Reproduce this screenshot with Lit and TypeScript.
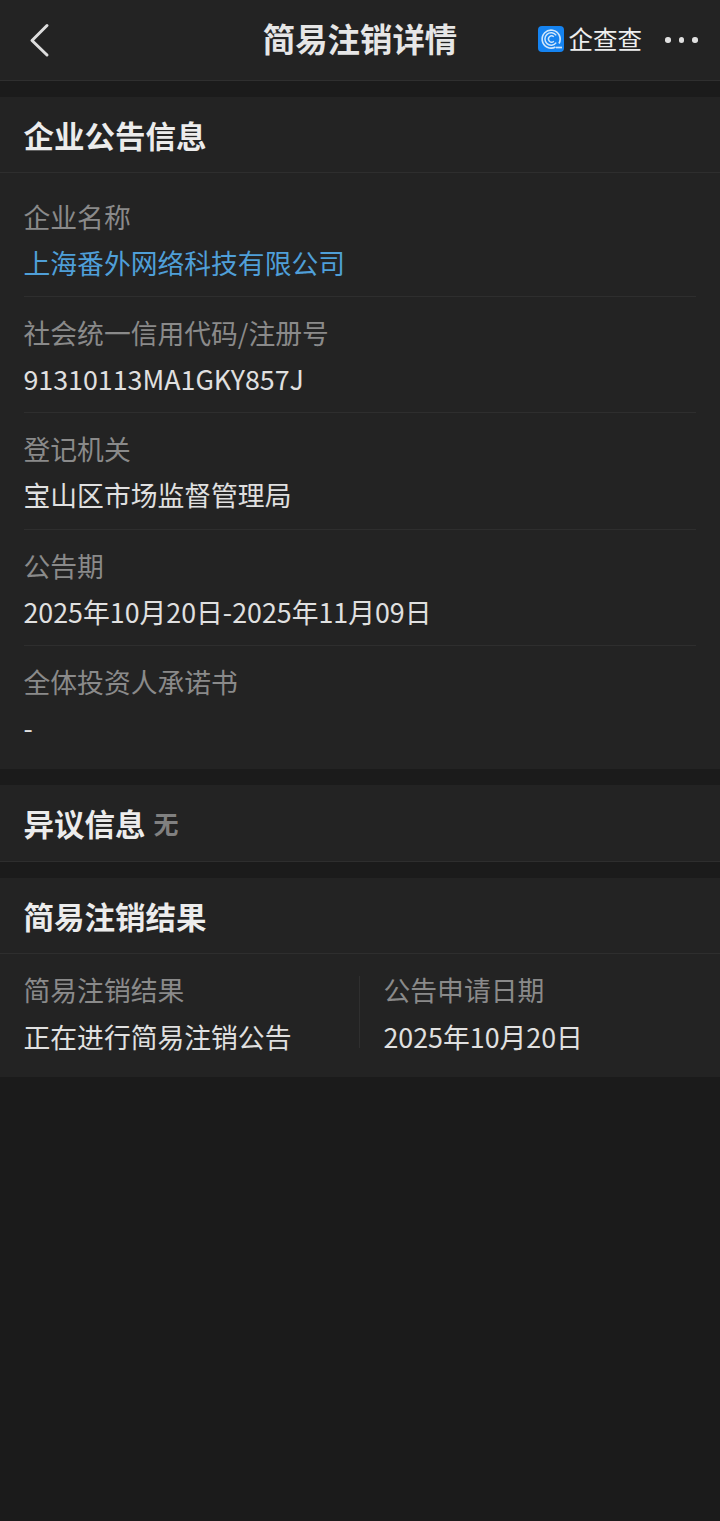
import { LitElement, html, css } from "lit";
import { customElement } from "lit/decorators.js";

const rows = [
  { label: "企业名称", value: "上海番外网络科技有限公司", link: true },
  { label: "社会统一信用代码/注册号", value: "91310113MA1GKY857J" },
  { label: "登记机关", value: "宝山区市场监督管理局" },
  { label: "公告期", value: "2025年10月20日-2025年11月09日" },
  { label: "全体投资人承诺书", value: "-" },
];

@customElement("app-root")
export class AppRoot extends LitElement {
  static styles = css`
    :host {
      display: block;
      width: 720px;
      height: 1521px;
      background: #1b1b1b;
      font-family: "Noto Sans CJK SC", "Noto Sans", sans-serif;
      overflow: hidden;
    }
    .nav {
      height: 80px;
      background: #232323;
      border-bottom: 1px solid #2f2f2f;
      display: flex;
      align-items: center;
      position: relative;
      padding: 0 22.5px 0 28px;
    }
    .nav-title {
      position: absolute;
      left: 0;
      right: 0;
      top: -2px;
      text-align: center;
      font-size: 32.4px;
      font-weight: 700;
      line-height: 80px;
      color: #e6e6e6;
    }
    .back { display: block; position: relative; }
    .brand {
      margin-left: auto;
      display: flex;
      align-items: center;
      position: relative;
      top: -1px;
      gap: 5px;
    }
    .brand-name {
      font-size: 24.5px;
      line-height: 30px;
      color: #eeeeee;
      font-weight: 400;
    }
    .more { display: flex; gap: 8px; margin-left: 23px; position: relative; }
    .more i {
      width: 5.5px; height: 5.5px; border-radius: 50%; background: #e0e0e0; display: block;
    }
    .section {
      margin-top: 16px;
      background: #232323;
    }
    .head {
      height: 76px;
      box-sizing: border-box;
      border-bottom: 1px solid #2e2e2e;
      padding: 0 23.5px;
      display: flex;
      align-items: center;
      gap: 8px;
    }
    .head.tall { height: 77px; }
    .head h2 {
      margin: 0;
      font-size: 30.5px;
      font-weight: 700;
      line-height: 72px;
      color: #ececec;
    }
    .head span {
      font-size: 25px;
      font-weight: 700;
      color: #808080;
      line-height: 1;
    }
    .list { padding: 0 24px 0 23.5px; }
    .row {
      height: 116.4px;
      box-sizing: border-box;
      padding-top: 16px;
      border-bottom: 1px solid #2e2e2e;
    }
    .row:first-child { height: 124px; padding-top: 24px; }
    .row:last-child { border-bottom: none; height: 123px; }
    .label {
      font-size: 26.8px;
      line-height: 40px;
      color: #8a8a8a;
      white-space: nowrap;
    }
    .value {
      font-size: 26.8px;
      line-height: 40px;
      margin-top: 6px;
      color: #e0e0e0;
      white-space: nowrap;
    }
    .value.link { color: #4f9fd8; }
    .cols {
      display: grid;
      grid-template-columns: 359px 361px;
      padding: 22px 0 29px;
    }
    .col { padding: 0 24px 0 23.5px; height: 72px; }
    .col + .col { border-left: 1px solid #2f2f2f; box-sizing: border-box; }
    .col .label { margin-top: -6px; }
    .col .value { margin-top: 7px; }
  `;

  render() {
    return html`
      <div class="nav">
        <div class="nav-title">简易注销详情</div>
        <svg class="back" width="24" height="36" viewBox="0 0 24 36" fill="none">
          <path d="M19 3.5 L4 18.5 L19 33" stroke="#dddddd" stroke-width="3" stroke-linecap="round" stroke-linejoin="round"/>
        </svg>
        <div class="brand">
          <svg width="26" height="26" viewBox="0 0 26 26" fill="none">
            <rect width="26" height="26" rx="4" fill="#1583f0"/>
            <path d="M21 17.5A9 9 0 1 0 17.5 21" stroke="#cfe6fb" stroke-width="1.7"/>
            <path d="M18.2 9.4A6.2 6.2 0 1 0 18.2 16.6" stroke="#cfe6fb" stroke-width="1.5"/>
            <path d="M15.8 10.8A3.1 3.1 0 1 0 15.8 15.2" stroke="#cfe6fb" stroke-width="1.4"/>
            <path d="M18 21.5h6" stroke="#cfe6fb" stroke-width="1.7"/>
          </svg>
          <span class="brand-name">企查查</span>
        </div>
        <div class="more"><i></i><i></i><i></i></div>
      </div>
      <section class="section">
        <div class="head"><h2>企业公告信息</h2></div>
        <div class="list">
          ${rows.map(
            (r) => html`<div class="row">
              <div class="label">${r.label}</div>
              <div class="value ${r.link ? "link" : ""}">${r.value}</div>
            </div>`
          )}
        </div>
      </section>
      <section class="section">
        <div class="head tall"><h2>异议信息</h2><span>无</span></div>
      </section>
      <section class="section">
        <div class="head"><h2>简易注销结果</h2></div>
        <div class="cols">
          <div class="col">
            <div class="label">简易注销结果</div>
            <div class="value">正在进行简易注销公告</div>
          </div>
          <div class="col">
            <div class="label">公告申请日期</div>
            <div class="value">2025年10月20日</div>
          </div>
        </div>
      </section>
    `;
  }
}
